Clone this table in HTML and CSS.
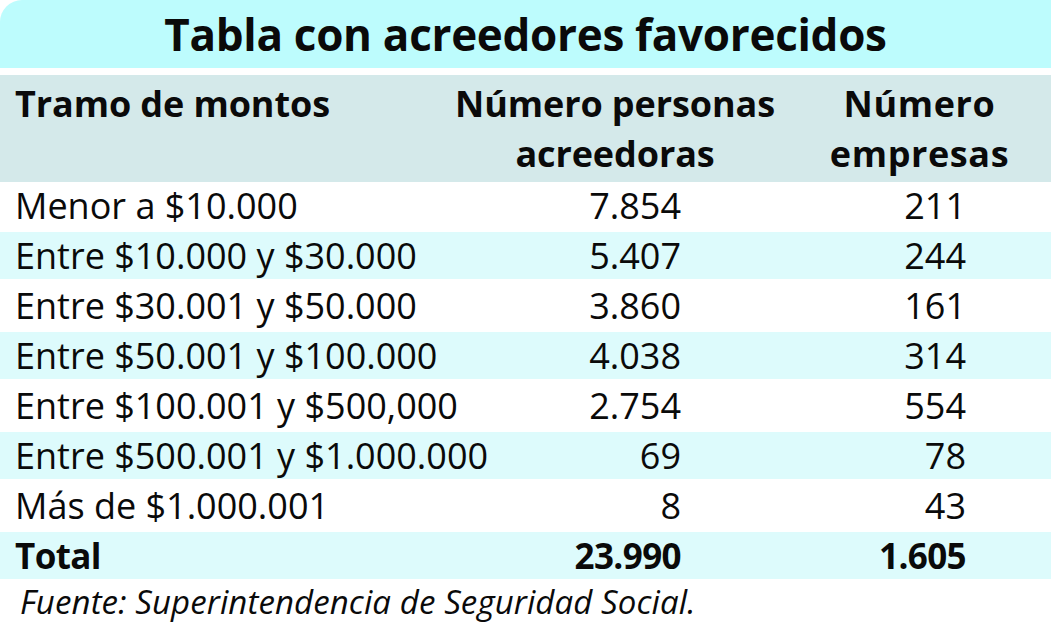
FILE: index.html
```html
<!DOCTYPE html>
<html lang="es">
<head>
<meta charset="utf-8">
<title>Tabla con acreedores favorecidos</title>
<link rel="stylesheet" href="styles.css">
</head>
<body>
<div class="card">
  <h1 class="title">Tabla con acreedores favorecidos</h1>
  <div class="head">
    <div class="hd c1">Tramo de montos</div>
    <div class="hd c2">Número personas<br>acreedoras</div>
    <div class="hd c3">Número<br>empresas</div>
  </div>
  <div class="body">
    <div class="row">
      <div class="c1">Menor a $10.000</div>
      <div class="num n2">7.854</div>
      <div class="num n3">211</div>
    </div>
    <div class="row alt">
      <div class="c1">Entre $10.000 y $30.000</div>
      <div class="num n2">5.407</div>
      <div class="num n3">244</div>
    </div>
    <div class="row">
      <div class="c1">Entre $30.001 y $50.000</div>
      <div class="num n2">3.860</div>
      <div class="num n3">161</div>
    </div>
    <div class="row alt">
      <div class="c1">Entre $50.001 y $100.000</div>
      <div class="num n2">4.038</div>
      <div class="num n3">314</div>
    </div>
    <div class="row">
      <div class="c1">Entre $100.001 y $500,000</div>
      <div class="num n2">2.754</div>
      <div class="num n3">554</div>
    </div>
    <div class="row alt">
      <div class="c1">Entre $500.001 y $1.000.000</div>
      <div class="num n2">69</div>
      <div class="num n3">78</div>
    </div>
    <div class="row">
      <div class="c1">Más de $1.000.001</div>
      <div class="num n2">8</div>
      <div class="num n3">43</div>
    </div>
    <div class="row alt total">
      <div class="c1">Total</div>
      <div class="num n2">23.990</div>
      <div class="num n3">1.605</div>
    </div>
  </div>
  <p class="source">Fuente: Superintendencia de Seguridad Social.</p>
</div>
</body>
</html>
```
FILE: styles.css
```css
html, body {
  margin: 0;
  padding: 0;
  background: #ffffff;
}

body {
  width: 1051px;
  font-family: "Open Sans", "Noto Sans", "Liberation Sans", sans-serif;
  color: #0a0a0a;
}

.card {
  display: flex;
  flex-direction: column;
}

.title {
  margin: 0;
  height: 68px;
  line-height: 68px;
  font-size: 44px;
  font-weight: 700;
  text-align: center;
  background: #bdfcfd;
  border-top-left-radius: 22px;
  letter-spacing: -0.3px;
}

.head {
  margin-top: 7px;
  display: grid;
  grid-template-columns: 440px 350px 1fr;
  background: #d4e9ea;
  padding: 4px 0 3px;
}

.hd {
  font-size: 36px;
  font-weight: 700;
  line-height: 50px;
  letter-spacing: -0.1px;
}

.hd.c1 {
  padding-left: 15px;
}

.hd.c2,
.hd.c3 {
  text-align: center;
}

.hd.c3 {
  padding-right: 2px;
  letter-spacing: 0.6px;
}

.body {
  display: flex;
  flex-direction: column;
}

.row {
  display: grid;
  grid-template-columns: 500px 290px 1fr;
  font-size: 36px;
  line-height: 47px;
  border-bottom: 3px solid #ffffff;
  white-space: nowrap;
}

.row .c1 {
  padding-left: 15px;
}

.num {
  text-align: right;
}

.n2 {
  padding-right: 109px;
}

.n3 {
  padding-right: 85px;
}

.alt {
  background: #ddfbfc;
}

.total {
  font-weight: 700;
  font-size: 35px;
  letter-spacing: -0.6px;
}

.source {
  margin: 0;
  padding-left: 20px;
  font-size: 33px;
  font-style: italic;
  line-height: 40px;
  letter-spacing: 0.1px;
}
```
